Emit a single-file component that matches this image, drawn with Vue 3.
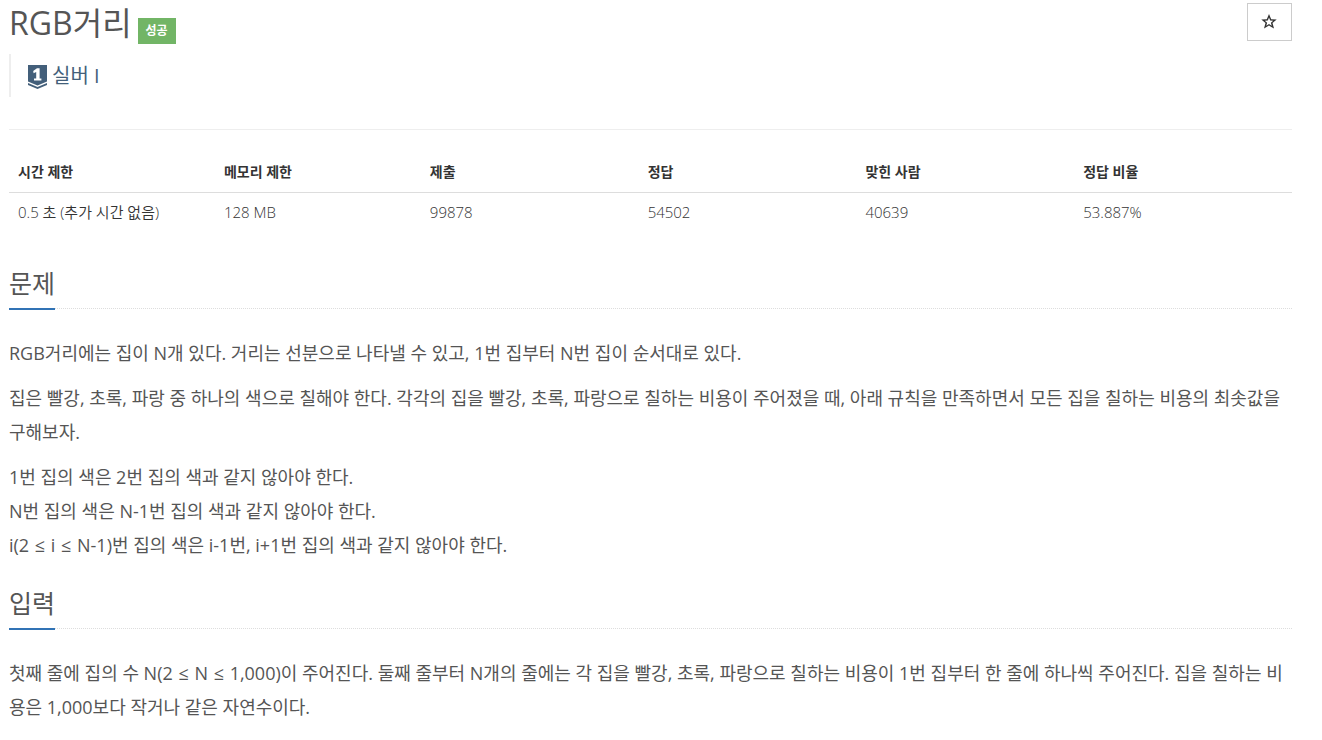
<script setup>
const limits = [
  ['시간 제한', '0.5 초 (추가 시간 없음)'],
  ['메모리 제한', '128 MB'],
  ['제출', '99878'],
  ['정답', '54502'],
  ['맞힌 사람', '40639'],
  ['정답 비율', '53.887%'],
]
</script>

<template>
  <main class="page">
    <header class="head">
      <div class="title-row">
        <h1>RGB거리</h1>
        <span class="label">성공</span>
        <button class="star" type="button" aria-label="즐겨찾기">
          <svg viewBox="0 0 16 16" width="16" height="16"><path fill-rule="evenodd" d="M8 0 10.2 5.2 15.7 5.5 11.5 9 13 14.6 8 11.6 3 14.6 4.5 9 .3 5.5 5.8 5.2ZM8 3.6 6.8 6.6 3.8 6.8 6.1 8.8 5.3 11.8 8 10.1 10.7 11.8 9.9 8.8 12.2 6.8 9.2 6.6Z" /></svg>
        </button>
      </div>
      <blockquote class="tier">
        <svg viewBox="0 0 19 24" width="19" height="24">
          <path d="M0 0H19V16.5L9.5 20.5 0 16.5Z" fill="#435f7a" />
          <path d="M0 18 9.5 22 19 18V20L9.5 24 0 20Z" fill="#435f7a" />
          <path d="M5.2 6 9 3.2H11.6V13.5H13.4V15.6H6V13.5H8.2V6.9L5.6 8.2Z" fill="#fff" />
        </svg>
        <span>실버 I</span>
      </blockquote>
    </header>
    <table>
      <thead><tr><th v-for="l in limits" :key="l[0]" scope="col">{{ l[0] }}</th></tr></thead>
      <tbody><tr><td v-for="l in limits" :key="l[0]">{{ l[1] }}</td></tr></tbody>
    </table>
    <section>
      <div class="headline"><h2>문제</h2></div>
      <p>RGB거리에는 집이 N개 있다. 거리는 선분으로 나타낼 수 있고, 1번 집부터 N번 집이 순서대로 있다.</p>
      <p>집은 빨강, 초록, 파랑 중 하나의 색으로 칠해야 한다. 각각의 집을 빨강, 초록, 파랑으로 칠하는 비용이 주어졌을 때, 아래 규칙을 만족하면서 모든 집을 칠하는 비용의 최솟값을 구해보자.</p>
      <ul>
        <li>1번 집의 색은 2번 집의 색과 같지 않아야 한다.</li>
        <li>N번 집의 색은 N-1번 집의 색과 같지 않아야 한다.</li>
        <li>i(2 <span class="op">≤</span> i <span class="op">≤</span> N-1)번 집의 색은 i-1번, i+1번 집의 색과 같지 않아야 한다.</li>
      </ul>
    </section>
    <section>
      <div class="headline"><h2>입력</h2></div>
      <p>첫째 줄에 집의 수 N(2 <span class="op">≤</span> N <span class="op">≤</span> 1,000)이 주어진다. 둘째 줄부터 N개의 줄에는 각 집을 빨강, 초록, 파랑으로 칠하는 비용이 1번 집부터 한 줄에 하나씩 주어진다. 집을 칠하는 비용은 1,000보다 작거나 같은 자연수이다.</p>
    </section>
  </main>
</template>

<style>
body { background: #fff; }
</style>

<style scoped>
.page { padding: 0 30px 0 9px; color: #333; font: 14px/20px "Open Sans", "Noto Sans CJK KR", sans-serif; }
.head { border-bottom: 1px solid #eee; padding-bottom: 32px; margin-bottom: 32px; }
.title-row { display: flex; align-items: flex-start; padding-top: 3px; }
h1 { margin: 0; font-size: 32px; line-height: 40px; font-weight: 400; color: #555; }
.label { margin: 15px 0 0 6px; padding: 0 8px; height: 26px; line-height: 26px; background: #72b566; color: #fff; font-size: 12px; font-weight: 700; }
.star { margin-left: auto; width: 45px; height: 38px; padding: 0 2px 0 0; border: 1px solid #ccc; background: #fff; display: grid; place-items: center; }
.star path { fill: #333; }
.tier { margin: 10px 0 0; padding: 0 0 0 17px; border-left: 2px solid #eee; height: 43px; display: flex; align-items: center; gap: 5px; font-size: 20px; font-weight: 400; color: #435f7a; }
.tier svg { margin-top: 2px; }
table { width: 100%; table-layout: fixed; border-collapse: collapse; }
th, td { text-align: left; padding: 0 9px; width: 17%; }
th { font-weight: 700; height: 30px; border-bottom: 1px solid #ddd; vertical-align: top; font-size: 14px; }
td { height: 38px; font-size: 15px; font-weight: 350; }
th:nth-child(-n+2) { width: 16%; }
section { margin-top: 33px; }
section + section { margin-top: 22px; }
.headline { border-bottom: 1px dotted #ddd; margin-bottom: 27px; }
h2 { display: inline-block; margin: 0 0 -2px; padding-bottom: 6px; border-bottom: 2px solid #3173b5; font-size: 25px; line-height: 38px; font-weight: 400; color: #555; vertical-align: top; }
p, ul { margin: 0 0 11px; font-size: 18px; line-height: 34px; font-weight: 400; color: #555; }
.op { margin: 0 1px; }
ul { padding: 0; list-style: none; }
</style>
